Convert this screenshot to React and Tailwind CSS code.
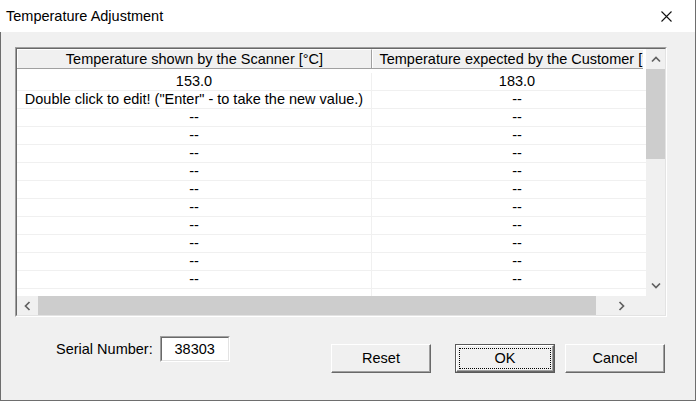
import React from "react";

const rows = [
  ["153.0", "183.0"],
  ['Double click to edit! ("Enter" - to take the new value.)', "--"],
  ...Array.from({ length: 11 }, () => ["--", "--"]),
];

function Chevron({ dir }) {
  const paths = {
    up: "M1 5.5 L5 1.5 L9 5.5",
    down: "M1 1.5 L5 5.5 L9 1.5",
    left: "M5.5 1 L1.5 5 L5.5 9",
    right: "M1.5 1 L5.5 5 L1.5 9",
  };
  const isV = dir === "up" || dir === "down";
  return (
    <svg width={isV ? 10 : 7} height={isV ? 7 : 10} viewBox={isV ? "0 0 10 7" : "0 0 7 10"}>
      <path d={paths[dir]} fill="none" stroke="#606060" strokeWidth="1.7" />
    </svg>
  );
}

function Button({ children, focused }) {
  if (focused) {
    return (
      <div className="w-[100px] h-[29px] border border-[#5a5a5a]">
        <div className="w-full h-full border-t border-l border-white border-r border-b border-r-[#696969] border-b-[#696969] shadow-[inset_-1px_-1px_0_#a0a0a0] bg-[#f0f0f0] p-[2px]">
          <div className="w-full h-full border border-dotted border-black flex items-center justify-center">
            {children}
          </div>
        </div>
      </div>
    );
  }
  return (
    <div className="w-[100px] h-[29px] border-t border-l border-white border-r border-b border-r-[#696969] border-b-[#696969] shadow-[inset_-1px_-1px_0_#a0a0a0] bg-[#f0f0f0] flex items-center justify-center">
      {children}
    </div>
  );
}

export default function App() {
  return (
    <div className="w-[696px] h-[401px] flex flex-col bg-[#f0f0f0] text-black font-['Liberation_Sans',Arial,sans-serif] text-[14.5px] leading-none overflow-hidden">
      {/* Title bar */}
      <div className="h-[32px] bg-white flex items-center justify-between pl-[6px] pr-[23px] border-r border-[#6e6e6e]">
        <span className="text-[14.5px]">Temperature Adjustment</span>
        <svg width="11" height="11" viewBox="0 0 11 11">
          <path d="M0.5 0.5 L10.5 10.5 M10.5 0.5 L0.5 10.5" stroke="#111" strokeWidth="1.1" />
        </svg>
      </div>

      {/* Body */}
      <div className="flex-1 flex flex-col border-l border-r border-b border-[#6e6e6e] pl-[14px] pt-[15px]">
        {/* List box */}
        <div className="w-[652px] h-[270px] border border-t-[#a0a0a0] border-l-[#a0a0a0] border-r-white border-b-white">
          <div className="w-full h-full border border-t-[#696969] border-l-[#696969] border-r-[#e3e3e3] border-b-[#e3e3e3] flex flex-col">
            <div className="flex h-[247px]">
              {/* data area */}
              <div className="w-[629px] h-full overflow-hidden bg-white">
                <div className="w-[645px]">
                  <div className="flex h-[20px] w-[626px] overflow-hidden bg-[#f0f0f0] border-b border-[#a0a0a0]">
                    <div className="w-[355px] shrink-0 border-t border-l border-white border-r border-r-[#a0a0a0] flex items-center justify-center whitespace-nowrap overflow-hidden">
                      Temperature shown by the Scanner [°C]
                    </div>
                    <div className="w-[297px] shrink-0 border-t border-l border-white flex items-center justify-center whitespace-nowrap overflow-hidden">
                      Temperature expected by the Customer [°C]
                    </div>
                  </div>
                  <div className="h-[4px]" />
                  {rows.map((r, i) => (
                    <div key={i} className="flex h-[18px] border-b border-[#f0f0f0]">
                      <div className="w-[355px] shrink-0 border-r border-[#f0f0f0] flex items-center justify-center whitespace-nowrap">
                        {r[0]}
                      </div>
                      <div className="w-[290px] shrink-0 flex items-center justify-center whitespace-nowrap">
                        {r[1]}
                      </div>
                    </div>
                  ))}
                </div>
              </div>
              {/* vertical scrollbar */}
              <div className="w-[19px] h-full flex flex-col bg-[#f0f0f0]">
                <div className="h-[20px] flex items-center justify-center">
                  <Chevron dir="up" />
                </div>
                <div className="h-[90px] bg-[#cdcdcd]" />
                <div className="flex-1" />
                <div className="h-[22px] flex items-center justify-center">
                  <Chevron dir="down" />
                </div>
              </div>
            </div>
            {/* horizontal scrollbar */}
            <div className="flex flex-1">
              <div className="w-[629px] h-full flex bg-[#f0f0f0]">
                <div className="w-[21px] flex items-center justify-center">
                  <Chevron dir="left" />
                </div>
                <div className="w-[558px] bg-[#cdcdcd]" />
                <div className="flex-1 flex items-center justify-center">
                  <Chevron dir="right" />
                </div>
              </div>
              <div className="w-[19px] bg-[#f0f0f0]" />
            </div>
          </div>
        </div>

        {/* Bottom row */}
        <div className="flex items-start">
          <div className="flex items-center ml-[41px] mt-[19px]">
            <span>Serial Number:</span>
            <div className="ml-[7px] w-[70px] h-[26px] border border-t-[#a0a0a0] border-l-[#a0a0a0] border-r-white border-b-white">
              <div className="w-full h-full bg-white border border-t-[#696969] border-l-[#696969] border-r-[#e3e3e3] border-b-[#e3e3e3] flex items-center justify-center">
                38303
              </div>
            </div>
          </div>
          <div className="flex ml-auto mr-[30px] mt-[27px]">
            <Button>Reset</Button>
            <div className="ml-[24px]">
              <Button focused>OK</Button>
            </div>
            <div className="ml-[10px]">
              <Button>Cancel</Button>
            </div>
          </div>
        </div>
      </div>
    </div>
  );
}
